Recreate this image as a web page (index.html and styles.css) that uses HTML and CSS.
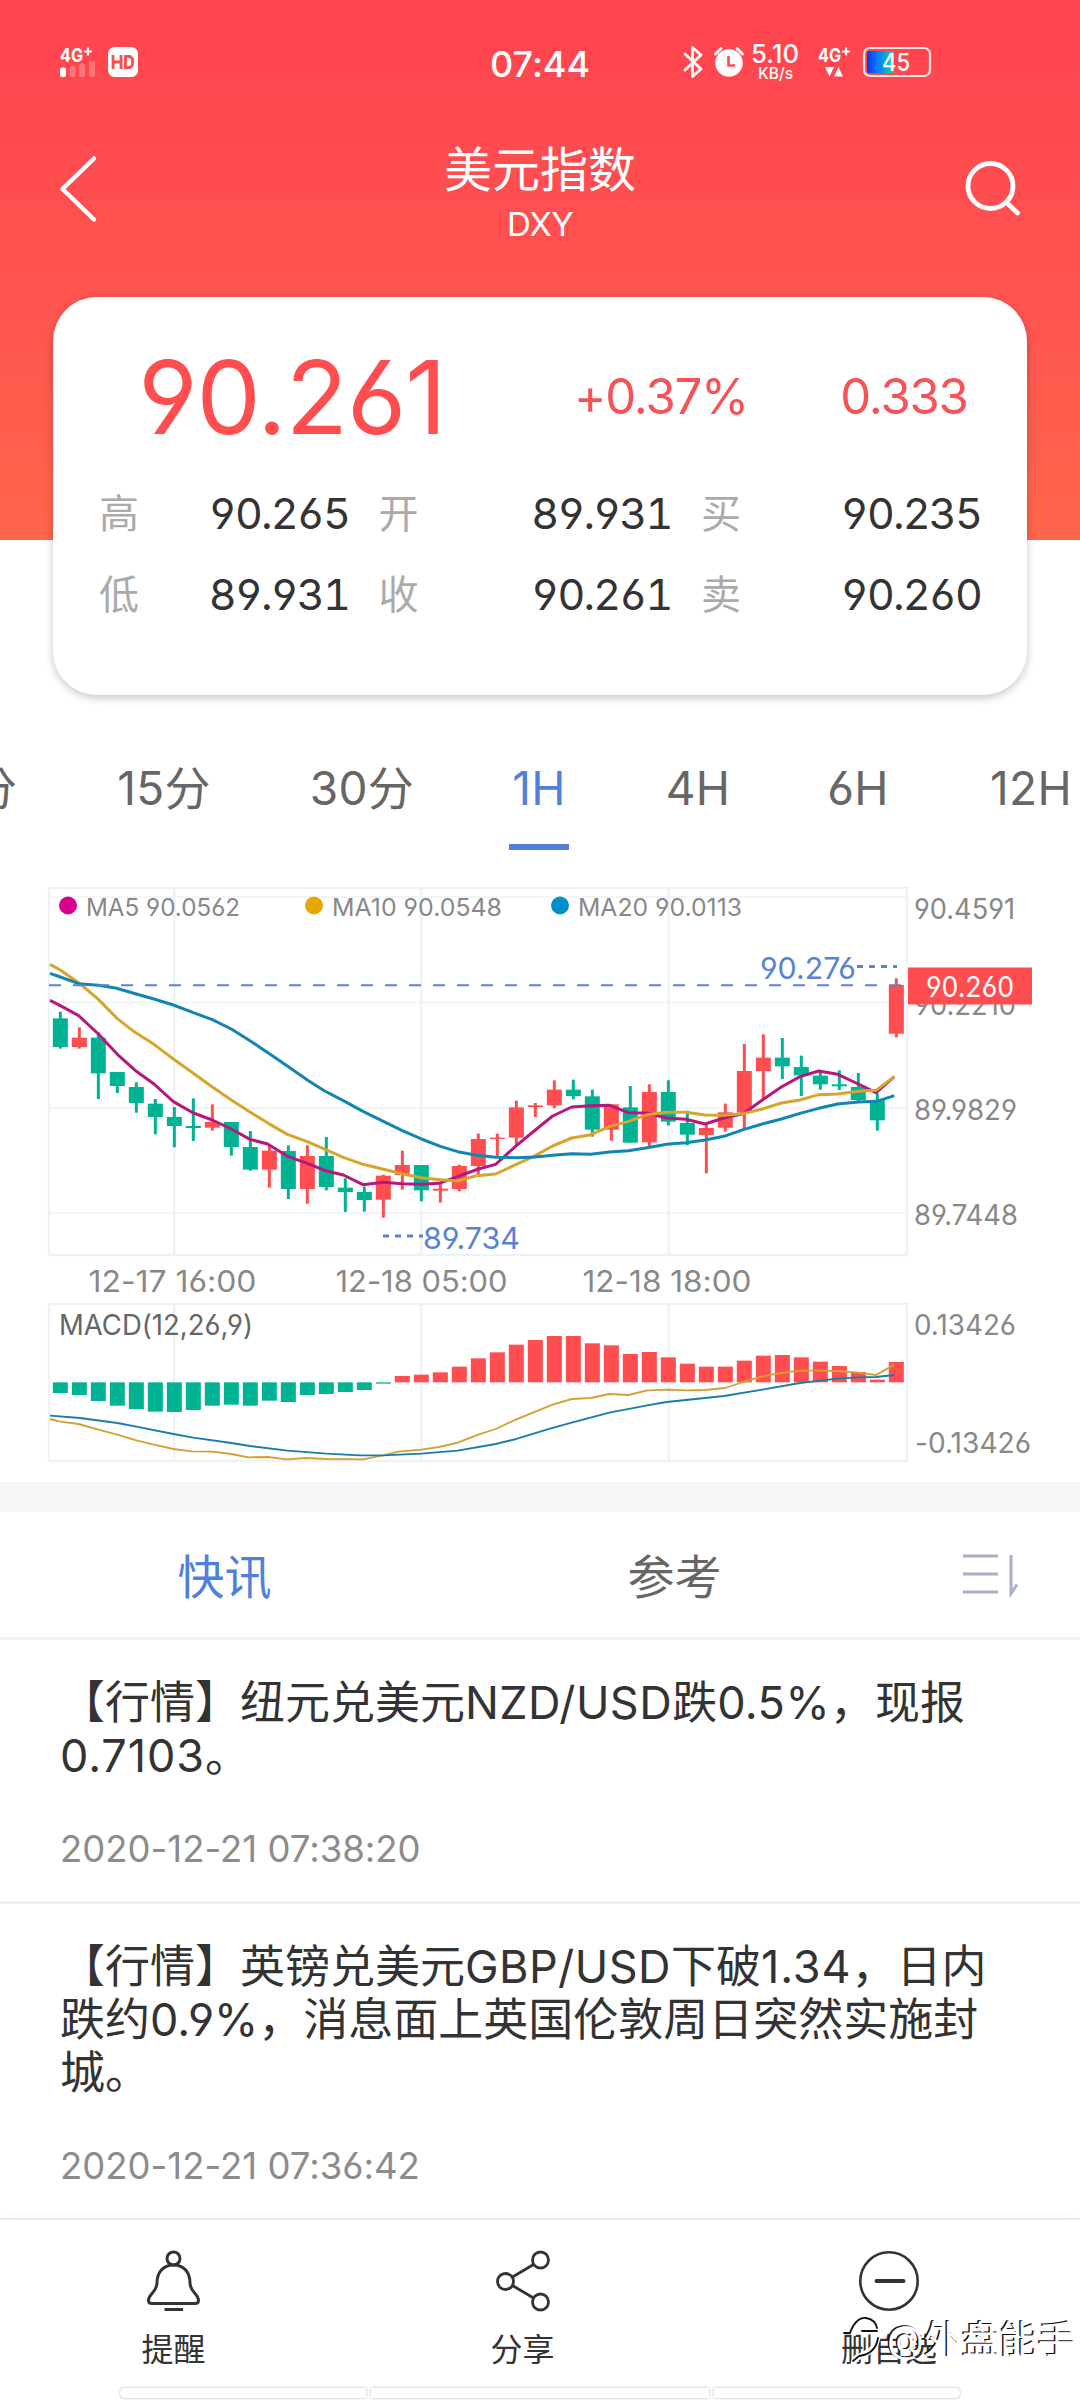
FILE: index.html
```html
<!DOCTYPE html>
<html lang="zh-CN">
<head>
<meta charset="utf-8">
<title>美元指数 DXY</title>
<link rel="stylesheet" href="styles.css">
</head>
<body>
<div class="screen">
  <header class="hero">
    <div class="status">
      <svg class="status-left" width="90" height="40" viewBox="56 42 90 40">
        <text class="st-bold" x="60" y="62" font-size="19" textLength="23" lengthAdjust="spacingAndGlyphs">4G</text>
        <path d="M84 51.500h8M88 47.500v8" stroke="#fff" stroke-width="2.200"/>
        <rect x="60" y="67.500" width="6" height="9.500" rx="2" fill="#fff"/>
        <g fill="#fff" opacity=".25"><rect x="69.500" y="66" width="6" height="11" rx="2"/><rect x="79" y="63.500" width="6" height="13.500" rx="2"/><rect x="89" y="61" width="6" height="16" rx="2"/></g>
        <rect x="108" y="47" width="30" height="30" rx="6.500" fill="#fff"/>
        <path d="M113 55v14M121 55v14M113 62h8M125.500 56.500h4.500l2.500 2.500v6l-2.500 2.500h-4.500z" fill="none" stroke="#ff4a50" stroke-width="2.800"/>
      </svg>
      <div class="clock">07:44</div>
      <svg class="status-right" width="256" height="42" viewBox="680 40 256 42">
        <path d="M685 54l16 15-8.500 7.500v-29l8.500 7.500-16 15" fill="none" stroke="#fff" stroke-width="2.800" stroke-linejoin="round" stroke-linecap="round"/>
        <circle cx="729" cy="63" r="13.700" fill="#fff"/>
        <path d="M715.500 54l5.500-5.500M742.500 54l-5.500-5.500" stroke="#fff" stroke-width="3" stroke-linecap="round"/>
        <path d="M728.500 56v9.500h6.500" fill="none" stroke="#ff4a50" stroke-width="2.600"/>
        <text class="st-med" x="751" y="63" font-size="25" textLength="48" lengthAdjust="spacingAndGlyphs">5.10</text>
        <text class="st-med" x="758" y="79" font-size="16" textLength="35" lengthAdjust="spacingAndGlyphs">KB/s</text>
        <text class="st-bold" x="818" y="62" font-size="19" textLength="23" lengthAdjust="spacingAndGlyphs">4G</text>
        <path d="M842 51.500h8M846 47.500v8" stroke="#fff" stroke-width="2.200"/>
        <path d="M825 67h9l-4.500 9.500zM834 76.500h9l-4.500-9.500z" fill="#fff"/>
        <defs><linearGradient id="charge"><stop offset="0" stop-color="#0b36f0"/><stop offset=".45" stop-color="#0784f5"/><stop offset="1" stop-color="#18d8a8"/></linearGradient></defs>
        <rect x="867" y="51" width="27" height="22" rx="2" fill="url(#charge)"/>
        <rect x="864" y="48" width="66" height="28" rx="6" fill="none" stroke="#fff" stroke-opacity=".88" stroke-width="2.200"/>
        <text class="st-med" x="882" y="71" font-size="24" textLength="28" lengthAdjust="spacingAndGlyphs">45</text>
      </svg>
    </div>
    <nav class="topbar">
      <svg width="44" height="72" viewBox="56 153 44 72"><path d="M94 158.500L62.500 189 94 219.500" fill="none" stroke="#fff" stroke-width="4.500" stroke-linecap="round" stroke-linejoin="round"/></svg>
      <div class="titles">
        <h1>美元指数</h1>
        <div class="symbol">DXY</div>
      </div>
      <svg width="64" height="64" viewBox="960 157 64 64"><g fill="none" stroke="#fff" stroke-width="4.800" stroke-linecap="round"><circle cx="990.500" cy="186" r="22.500"/><path d="M1007.500 203.500l10 9.500"/></g></svg>
    </nav>
  </header>

  <section class="quote">
    <div class="headline">
      <span class="price">90.261</span>
      <span class="delta">+0.37%</span>
      <span class="delta">0.333</span>
    </div>
    <div class="stats">
      <div class="stat"><label>高</label><span>90.265</span></div>
      <div class="stat"><label>开</label><span>89.931</span></div>
      <div class="stat"><label>买</label><span>90.235</span></div>
      <div class="stat"><label>低</label><span>89.931</span></div>
      <div class="stat"><label>收</label><span>90.261</span></div>
      <div class="stat"><label>卖</label><span>90.260</span></div>
    </div>
  </section>

  <div class="periods">
    <span>5分</span><span>15分</span><span>30分</span><span class="on">1H</span><span>4H</span><span>6H</span><span>12H</span>
  </div>

  <svg class="chart" width="1080" height="602" viewBox="0 880 1080 602">
    <g class="grid">
      <path d="M49 888H907V1255H49zM49 1304H907V1461H49zM174.300 888V1255M421.300 888V1255M668.600 888V1255M174.300 1304V1461M421.300 1304V1461M668.600 1304V1461"/>
      <path class="fine" d="M49 897H907M49 1002.500H907M49 1108H907M49 1213H907"/>
    </g>
    <g class="legend">
      <circle cx="68" cy="905.500" r="9" fill="#d6008a"/><text x="86" y="916" textLength="154" lengthAdjust="spacingAndGlyphs">MA5 90.0562</text>
      <circle cx="314" cy="905.500" r="9" fill="#e8a600"/><text x="332" y="916" textLength="170" lengthAdjust="spacingAndGlyphs">MA10 90.0548</text>
      <circle cx="560" cy="905.500" r="9" fill="#008fcb"/><text x="578" y="916" textLength="164" lengthAdjust="spacingAndGlyphs">MA20 90.0113</text>
    </g>
    <g id="candles" transform="translate(30 870) scale(.33333)"></g>
    <g transform="translate(30 870) scale(.33333)" class="ma">
      <polyline stroke="#b7187e" points="60,391 91,407 146,437 205,492 262,553 319,604 372,642 430,695 490,729 547,750 604,777 660,808 713,822 775,860 832,880 889,903 940,915 999,944 1060,937 1117,941 1174,943 1227,940 1288,918 1345,897 1397,883 1459,827 1516,780 1568,738 1625,711 1682,707 1738,706 1795,728 1852,729 1910,744 1968,748 2025,762 2082,744 2140,731 2197,690 2254,651 2310,620 2366,603 2423,613 2485,642 2538,668 2593,620"/>
      <polyline stroke="#d6a62c" points="60,283 91,300 150,341 205,388 262,446 315,487 372,523 430,567 490,610 547,651 604,690 660,726 715,760 772,793 832,815 889,840 940,862 999,883 1060,898 1117,911 1174,923 1231,929 1283,933 1340,917 1397,912 1459,883 1510,860 1568,828 1625,804 1682,794 1738,770 1795,754 1852,734 1910,727 1968,727 2025,735 2082,736 2140,731 2197,717 2254,699 2310,690 2366,674 2423,672 2485,664 2538,661 2593,620"/>
      <polyline stroke="#1285b2" points="60,310 91,321 146,341 205,346 257,354 319,372 372,387 430,405 490,428 547,449 604,477 660,512 715,549 772,588 832,630 884,663 940,692 999,724 1060,754 1117,782 1174,807 1231,829 1283,845 1340,856 1397,862 1459,863 1516,861 1568,856 1625,851 1682,853 1738,846 1795,842 1852,833 1910,823 1968,818 2025,810 2082,799 2140,779 2197,762 2254,747 2310,730 2366,715 2423,702 2485,696 2540,694 2593,677"/>
    </g>
    <path d="M49 985.200H902" stroke="#5a82d2" stroke-width="2" stroke-dasharray="12 12"/>
    <g class="extreme">
      <text x="760" y="979" textLength="96" lengthAdjust="spacingAndGlyphs">90.276</text>
      <path d="M857 966.500H897M383 1236H423"/>
      <text x="423" y="1248.500" textLength="97" lengthAdjust="spacingAndGlyphs">89.734</text>
    </g>
    <g class="axis">
      <text x="914" y="919" textLength="101" lengthAdjust="spacingAndGlyphs">90.4591</text>
      <text x="914" y="1015" textLength="102" lengthAdjust="spacingAndGlyphs">90.2210</text>
      <text x="914" y="1120" textLength="103" lengthAdjust="spacingAndGlyphs">89.9829</text>
      <text x="914" y="1225" textLength="104" lengthAdjust="spacingAndGlyphs">89.7448</text>
      <text x="914" y="1335" textLength="102" lengthAdjust="spacingAndGlyphs">0.13426</text>
      <text x="915" y="1453" textLength="116" lengthAdjust="spacingAndGlyphs">-0.13426</text>
    </g>
    <g class="times">
      <text x="88.500" y="1292" textLength="168" lengthAdjust="spacingAndGlyphs">12-17 16:00</text>
      <text x="335.500" y="1292" textLength="172" lengthAdjust="spacingAndGlyphs">12-18 05:00</text>
      <text x="582.500" y="1292" textLength="169" lengthAdjust="spacingAndGlyphs">12-18 18:00</text>
    </g>
    <rect x="908" y="967.500" width="124" height="37" fill="#ff4d50"/>
    <text class="tag" x="926" y="997" textLength="88" lengthAdjust="spacingAndGlyphs">90.260</text>
    <g id="macd" transform="translate(30 1280) scale(.33333)"></g>
    <g transform="translate(30 1280) scale(.33333)" class="ma thin">
      <polyline stroke="#d2a132" points="60,417 91,425 146,432 205,449 262,464 319,481 372,494 430,507 485,514 547,515 604,522 655,532 715,531 770,538 827,534 889,537 999,538 1060,526 1105,515 1174,509 1227,501 1283,488 1345,464 1397,447 1459,418 1568,374 1625,357 1682,354 1738,342 1795,345 1852,331 1914,329 1968,331 2025,330 2085,324 2140,306 2197,289 2254,279 2310,272 2366,272 2423,273 2485,278 2538,285 2593,254"/>
      <polyline stroke="#1a7ca8" points="60,407 150,414 262,429 319,440 430,462 490,473 604,489 660,498 772,512 889,521 990,526 1060,526 1174,521 1283,512 1397,492 1459,477 1560,446 1625,428 1738,398 1852,376 1910,366 2025,354 2082,348 2197,329 2310,309 2423,296 2485,292 2538,291 2593,285"/>
    </g>
    <text class="macd-name" x="59" y="1335" textLength="194" lengthAdjust="spacingAndGlyphs">MACD(12,26,9)</text>
  </svg>

  <div class="divider"></div>

  <div class="feed-tabs">
    <span class="on">快讯</span>
    <span>参考</span>
    <svg width="64" height="48" viewBox="958 1551 64 48"><path d="M963 1556h35M963 1574h35M963 1592h35M1011 1555v38.500l6-9" fill="none" stroke="#a9aecb" stroke-width="3"/></svg>
  </div>

  <article class="news">
    <p>【行情】纽元兑美元<span class="lat">NZD/USD</span>跌<span class="lat">0.5%</span>，现报<br><span class="lat wide">0.7103</span>。</p>
    <time>2020-12-21 07:38:20</time>
  </article>
  <article class="news last">
    <p>【行情】英镑兑美元<span class="lat">GBP/USD</span>下破<span class="lat wide">1.34</span>，日内<br>跌约0.9%，消息面上英国伦敦周日突然实施封<br>城。</p>
    <time>2020-12-21 07:36:42</time>
  </article>

  <footer class="actions">
    <div class="action">
      <svg width="64" height="64" viewBox="142 2249 64 64"><g fill="none" stroke="#333" stroke-width="3"><circle cx="173.500" cy="2258.500" r="6.500"/><path d="M173.500 2265c-11 0-16.500 8-16.500 18 0 9-8.500 11-8.500 17.500 0 2 1.500 3 3.500 3h43c2 0 3.500-1 3.500-3 0-6.500-8.500-8.500-8.500-17.500 0-10-5.500-18-16.500-18zM164.500 2309.500h18.500"/></g></svg>
      <span>提醒</span>
    </div>
    <div class="action">
      <svg width="64" height="64" viewBox="491 2249 64 64"><g fill="none" stroke="#333" stroke-width="2.800"><circle cx="540.500" cy="2260" r="8"/><circle cx="505.500" cy="2281.500" r="8"/><circle cx="540.500" cy="2302" r="8"/><path d="M512.500 2277l21-12.500M512.500 2285.500l21 12.500"/></g></svg>
      <span>分享</span>
    </div>
    <div class="action">
      <svg width="64" height="64" viewBox="857 2249 64 64"><g fill="none" stroke="#333"><circle cx="889" cy="2281" r="28.700" stroke-width="2.600"/><path d="M876.500 2281h27" stroke-width="4" stroke-linecap="round"/></g></svg>
      <span>删自选</span>
    </div>
    <div class="dock"><i></i><i></i><i></i></div>
    <div class="stamp">
      <svg width="40" height="50" viewBox="841 2317 40 50"><g fill="none" stroke-linecap="round"><path d="M854 2336c2-9 9-15 15-13 8 2 11 13 7 23-3 8-11 11-20 15l-2 4" stroke="#fff" stroke-width="6"/><path d="M844 2336h6c3-9 9-16 16-15 6 1 10 5 11 10M878 2341c-2 13-11 17-19 18l-6 5M862 2334h15" stroke="#111" stroke-width="1.800"/></g></svg>
      <span>@外盘能手</span>
    </div>
  </footer>
</div>
<script src="chart.js"></script>
</body>
</html>
```
FILE: styles.css
```css
* { box-sizing: border-box; }
body {
  margin: 0;
  background: #fff;
  font-family: Inter, "Noto Sans CJK SC", sans-serif;
  font-feature-settings: "cv03", "cv04", "calt" 0;
  color: #333;
}
.screen { position: relative; width: 1080px; height: 2400px; overflow: hidden; background: #fff; }

.hero { height: 540px; background: linear-gradient(#ff434f, #ff5350 52%, #ff664b); color: #fff; }
.status { display: grid; grid-template-columns: 90px 1fr 256px; padding: 42px 144px 0 56px; height: 98px; }
.status-right { margin-top: -2px; }
.clock { font-size: 36px; line-height: 42px; font-weight: 500; padding: 1px 0 0 344px; }
.st-bold { font-weight: 700; fill: #fff; }
.st-med { font-weight: 500; fill: #fff; }

.topbar { display: flex; justify-content: space-between; align-items: center; padding: 0 56px; height: 182px; }
.topbar h1 { margin: 0; font-size: 48px; line-height: 60px; font-weight: 400; }
.titles { text-align: center; margin-left: 20px; margin-top: 8px; }
.symbol { font-size: 33px; line-height: 44px; margin-top: 2px; letter-spacing: -0.500px; }

.quote {
  position: relative;
  width: 974px; height: 398px;
  margin: -243px 53px 0;
  border-radius: 44px;
  background: #fff;
  box-shadow: 0 3px 9px rgba(0, 0, 0, .22);
}
.headline { display: grid; grid-template-columns: 424px 314px 172px; padding-left: 27px; height: 175px; padding-top: 24px; align-items: center; text-align: center; color: #ff4d50; }
.price { font-size: 102px; line-height: 120px; letter-spacing: -1px; padding-top: 1px; }
.delta { font-size: 49px; line-height: 60px; letter-spacing: -1.200px; color: #f65257; }
.stats { display: grid; grid-template-columns: 250px 293px 280px; column-gap: 29.500px; padding-left: 46px; grid-auto-rows: 81px; }
.stat { display: flex; justify-content: space-between; align-items: center; font-size: 43px; }
.stat label { font-size: 40px; color: #aaa; margin-top: -3px; }
.stat span { letter-spacing: -1.800px; font-feature-settings: "cv03", "cv04", "tnum"; }

.periods { display: grid; grid-template-columns: 170px 198px 198px 156px 162px 158px 188px; margin-left: -105px; width: 1230px; height: 156px; margin-top: 29px; font-size: 46px; line-height: 60px; letter-spacing: .300px; color: #666; text-align: center; padding-top: 34px; }
.periods span { height: 92px; }
.periods .on { color: #5180dc; justify-self: center; width: 60px; border-bottom: 6px solid #5180dc; white-space: nowrap; }

.chart { display: block; }
.grid path { fill: none; stroke: #eef2f5; stroke-width: 2.400; }
.grid .fine { stroke-width: 1.600; }
.legend { font-size: 24px; fill: #888; }
.axis { font-size: 28px; fill: #888; }
.times { font-size: 29.500px; fill: #888; }
.tag { font-size: 28px; fill: #fff; }
.extreme text { font-size: 30px; fill: #5a82d2; }
.extreme path { stroke: #5a82d2; stroke-width: 3; stroke-dasharray: 6 6; }
.macd-name { font-size: 28px; fill: #666; }
.ma polyline { fill: none; stroke-width: 9; stroke-linejoin: round; }
.ma.thin polyline { stroke-width: 5.500; }
.up { fill: #ff4d50; }
.down { fill: #00b392; }

.divider { height: 30px; background: #f5f6f8; }
.feed-tabs { display: grid; grid-template-columns: 449px 451px 180px; height: 128px; border-bottom: 3px solid #eef2f5; align-items: center; text-align: center; font-size: 47px; color: #666; }
.feed-tabs span { margin-top: -3px; }
.feed-tabs .on { color: #5180dc; }
.feed-tabs svg { margin-left: 58px; }

.news { height: 264px; padding: 36px 60px 0; border-bottom: 3px solid #eef0f5; }
.news.last { height: 314px; border: 0; }
.news p { margin: 0; font-size: 45px; line-height: 53px; white-space: nowrap; }
.lat { letter-spacing: .450px; }
.wide { letter-spacing: .900px; }
.news time { display: block; margin-top: 44px; font-size: 36.500px; line-height: 46px; letter-spacing: 0; color: #8c8c8c; }

.actions { position: relative; display: grid; grid-template-columns: 347px 351px 382px; height: 182px; border-top: 2px solid #e7ebeb; box-shadow: 0 -2px 12px rgba(0, 0, 0, .04); background: #fff; }
.action { display: flex; flex-direction: column; align-items: center; padding-top: 29px; font-size: 32px; }
.action span { margin-top: 14px; line-height: 46px; }
.dock { position: absolute; left: 120px; top: 168px; display: grid; grid-template-columns: 246px 338px 246px; gap: 5px; }
.dock i { height: 10px; background: #fff; box-shadow: 0 0 3px rgba(0, 0, 0, .3); }
.dock i:first-child { border-radius: 5px 0 0 5px; }
.dock i:last-child { border-radius: 0 5px 5px 0; }
.stamp { position: absolute; left: 841px; top: 94px; display: flex; align-items: center; gap: 6px; font-size: 38px; line-height: 50px; color: #fff; text-shadow: -1.500px -1px 0 #111; white-space: nowrap; }
```
FILE: chart.js
```js
// Each candle: [high, body top, body bottom, low, rising]
const candles = [
  [425,445,531,536,0],[472,503,531,536,1],[487,503,610,687,0],[606,606,648,669,0],[637,651,699,728,0],
  [687,701,741,793,0],[711,741,768,832,0],[685,768,774,813,0],[703,756,773,782,1],[756,756,831,857,0],
  [783,831,899,902,0],[825,842,899,953,1],[826,843,957,987,0],[826,858,957,1001,1],[801,858,951,961,0],
  [925,953,966,1026,0],[950,966,990,1025,0],[914,917,989,1043,1],[842,885,915,959,1],[885,885,961,994,0],
  [940,956,962,998,1],[884,888,957,964,1],[791,807,888,920,1],[791,803,807,862,1],[692,712,803,825,1],
  [699,706,711,741,1],[631,659,706,715,1],[629,659,678,688,0],[659,679,779,800,0],[703,703,779,812,1],
  [648,712,818,818,0],[643,666,817,829,1],[631,666,755,766,0],[722,759,794,826,0],[765,774,795,910,1],
  [701,727,773,785,1],[522,603,728,776,1],[493,563,603,690,1],[504,563,589,627,0],[557,591,616,678,0],
  [605,617,643,659,0],[601,643,649,660,0],[609,651,690,697,0],[670,690,751,782,0],[325,345,491,502,1]
];
const macd = [339,345,363,377,387,395,396,390,377,374,377,362,366,345,342,336,330,311,288,284,277,260,235,
  217,194,180,168,168,190,196,222,216,232,251,260,260,242,227,225,232,245,258,276,299,246];
const ZERO = 307, STEP = 57, FIRST = 91, BODY = 45, WICK = 9;

function bar(parent, x, y, w, h, rising) {
  const r = document.createElementNS('http://www.w3.org/2000/svg', 'rect');
  r.setAttribute('x', x - w / 2);
  r.setAttribute('y', y);
  r.setAttribute('width', w);
  r.setAttribute('height', h);
  r.setAttribute('class', rising ? 'up' : 'down');
  parent.appendChild(r);
}
const candleLayer = document.getElementById('candles');
candles.forEach(([hi, top, bottom, lo, rising], i) => {
  const x = FIRST + STEP * i;
  bar(candleLayer, x, hi, WICK, lo - hi, rising);
  bar(candleLayer, x, top, BODY, bottom - top, rising);
});
const macdLayer = document.getElementById('macd');
macd.forEach((v, i) => bar(macdLayer, FIRST + STEP * i, Math.min(v, ZERO), BODY, Math.abs(v - ZERO), v < ZERO));
```
